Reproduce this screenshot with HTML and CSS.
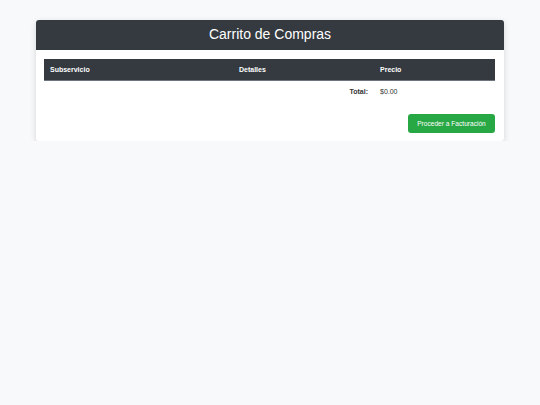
FILE: index.html
```html
<!DOCTYPE html>
<html lang="es">
<head>
<meta charset="utf-8">
<link rel="stylesheet" href="styles.css">
</head>
<body>
<div class="card">
  <div class="card-header">Carrito de Compras</div>
  <div class="card-body">
    <table class="cart">
      <thead>
        <tr><th class="c1">Subservicio</th><th class="c2">Detalles</th><th class="c3">Precio</th></tr>
      </thead>
      <tbody>
        <tr class="total-row"><td></td><td class="total-label">Total:</td><td class="total-value">$0.00</td></tr>
      </tbody>
    </table>
    <div class="actions"><button class="btn">Proceder a Facturación</button></div>
  </div>
</div>
</body>
</html>
```
FILE: styles.css
```css
html, body { margin: 0; padding: 0; }
body {
  background: #f8f9fa;
  font-family: "Liberation Sans", Arial, sans-serif;
  color: #212529;
  padding-top: 20px;
}
.card {
  width: 468px;
  margin: 0 auto;
  background: #fff;
  border-radius: 3px;
  box-shadow: 0 2px 6px rgba(0,0,0,0.15);
  overflow: hidden;
}
.card-header {
  background: #343a40;
  color: #fff;
  height: 30px;
  line-height: 29px;
  text-align: center;
  font-size: 14px;
}
.card-body { padding: 9px 9px 8px 8px; }
.cart {
  width: 451px;
  border-collapse: collapse;
  font-size: 7px;
}
.cart th {
  background: #343a40;
  color: #fff;
  font-weight: bold;
  text-align: left;
  height: 21px;
  padding: 0 6px;
  border-bottom: 1px solid #6c757d;
}
.c1 { width: 177px; }
.c2 { width: 129px; }
.total-row td { height: 20px; padding: 0 6px; color: #333; }
.total-label { text-align: right; font-weight: bold; }
.actions { display: flex; justify-content: flex-end; margin-top: 13px; }
.btn {
  background: #28a745;
  color: #fff;
  border: none;
  border-radius: 3px;
  font-family: "Liberation Sans", Arial, sans-serif;
  font-size: 6.6px;
  width: 87px;
  height: 19px;
  padding: 0;
}
```
